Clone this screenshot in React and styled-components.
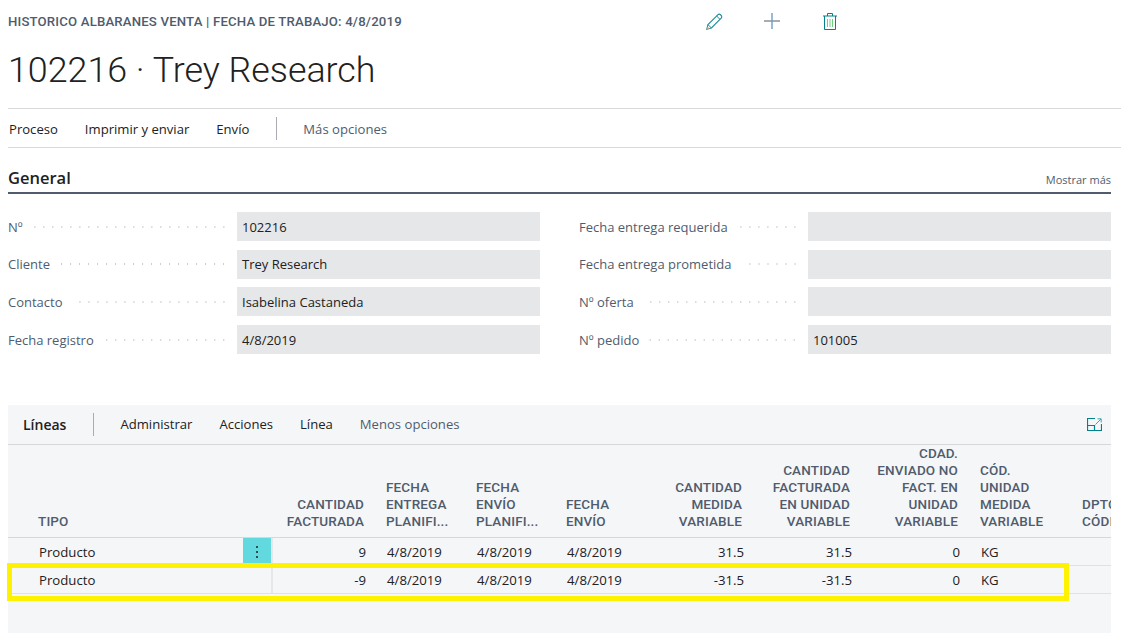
import React from 'react'
import styled, { createGlobalStyle } from 'styled-components'

const GlobalStyle = createGlobalStyle`
  html, body {
    margin: 0;
    padding: 0;
    background: #fff;
    font-family: "Open Sans", "Noto Sans", sans-serif;
    color: #212121;
  }
`

const Page = styled.div`
  width: 1121px;
  height: 633px;
  overflow: hidden;
  padding-left: 8px;
  box-sizing: border-box;
`

const Top = styled.div`
  display: flex;
  height: 42px;
  align-items: center;
`

const Caption = styled.div`
  font-family: Roboto, sans-serif;
  font-weight: 500;
  font-size: 13.2px;
  letter-spacing: 0.17px;
  color: #505c6d;
  width: 698px;
  flex: none;
  white-space: nowrap;
`

const TopIcons = styled.div`
  display: grid;
  grid-template-columns: 58px 59px auto;
  align-items: center;
`

const Title = styled.h1`
  margin: 0;
  height: 66px;
  font-family: Roboto, sans-serif;
  font-weight: 300;
  font-size: 35.8px;
  line-height: 56px;
  color: #212121;
  white-space: nowrap;
`

const ActionBar = styled.div`
  display: flex;
  align-items: center;
  height: 37px;
  padding-top: 1px;
  border-top: 1px solid #d8d8da;
  border-bottom: 1px solid #d8d8da;
  font-size: 13.1px;
`

const Action = styled.span`
  margin-left: ${(p) => p.$left || 0}px;
  color: ${(p) => (p.$muted ? '#505c6d' : '#212121')};
  white-space: nowrap;
`

const Divider = styled.span`
  width: 1px;
  height: 23px;
  background: #a9adb3;
  margin-left: ${(p) => p.$left}px;
`

const SectionHead = styled.div`
  display: flex;
  justify-content: space-between;
  align-items: flex-end;
  width: 1103px;
  height: 46px;
  box-sizing: border-box;
  border-bottom: 2px solid #505c6d;
  padding-bottom: 3px;
`

const SectionTitle = styled.h2`
  margin: 0;
  font-size: 16.5px;
  line-height: 22px;
  font-weight: 600;
  color: #212121;
`

const ShowMore = styled.span`
  font-size: 11px;
  line-height: 18px;
  color: #505c6d;
`

const Fields = styled.div`
  display: grid;
  grid-template-columns: 532px 532px;
  column-gap: 39px;
  padding-top: 18px;
`

const Field = styled.div`
  display: flex;
  height: 29px;
  margin-bottom: 8.7px;
  font-size: 13px;
`

const Label = styled.div`
  width: 229px;
  flex: none;
  display: flex;
  align-items: center;
  color: #505c6d;
  white-space: nowrap;
  padding-right: 9px;
  box-sizing: border-box;
`

const Dots = styled.span`
  flex: 1;
  height: 2px;
  margin-left: 10px;
  background-image: radial-gradient(circle, #c9ccd1 0.8px, transparent 0.9px);
  background-size: 9px 2px;
  background-repeat: repeat-x;
  background-position: right;
`

const Value = styled.div`
  flex: 1;
  display: flex;
  align-items: center;
  padding-left: 5px;
  background: #e6e7e9;
  color: #212121;
`

const Panel = styled.div`
  width: 1103px;
  height: 228px;
  margin-top: 42.2px;
  background: #f5f6f8;
  clip-path: inset(0 0 0 -2px);
`

const PanelBar = styled.div`
  display: flex;
  align-items: center;
  height: 40px;
  box-sizing: border-box;
  border-bottom: 1px solid #d5d7da;
  padding-right: 9px;
  font-size: 13.1px;
`

const PanelName = styled.span`
  margin-left: 15px;
  font-size: 14px;
  font-weight: 600;
  color: #212121;
`

const ExpandWrap = styled.span`
  margin-left: auto;
  display: flex;
`

const Row = styled.div`
  position: relative;
  display: grid;
  grid-template-columns: 235px 29px 104px 90px 90px 90px 108px 108px 108px 102px 80px;
  width: 1144px;
`

const HeadRow = styled(Row)`
  height: 92px;
  align-items: end;
  width: 1103px;
  border-bottom: 1px solid #d5d7da;
`

const Head = styled.div`
  font-family: Roboto, sans-serif;
  font-weight: 500;
  font-size: 13.5px;
  letter-spacing: 0.15px;
  line-height: 17px;
  color: #505c6d;
  padding-bottom: 7px;
  white-space: pre-line;
  text-align: ${(p) => (p.$right ? 'right' : 'left')};
  padding-left: ${(p) => p.$left || 0}px;
  padding-right: ${(p) => p.$right || 0}px;
`

const BodyRow = styled(Row)`
  height: 27px;
  width: 1103px;
  border-bottom: 1px solid #dfe1e4;
  font-size: 13.2px;
`

const Cell = styled.div`
  display: flex;
  align-items: center;
  justify-content: ${(p) => (p.$right ? 'flex-end' : 'flex-start')};
  padding-left: ${(p) => p.$left || 0}px;
  padding-right: ${(p) => p.$right || 0}px;
  padding-top: 1px;
  color: #212121;
`

const MenuCell = styled.div`
  display: flex;
  align-items: center;
  justify-content: center;
  background: ${(p) => (p.$active ? '#62d8df' : 'transparent')};
  box-shadow: 2px 0 0 #e6e7e9;
  width: 28px;
  margin-bottom: ${(p) => (p.$active ? '-1px' : '0')};
`

const Highlight = styled.div`
  position: absolute;
  left: -1px;
  top: -3px;
  width: 1062px;
  height: 38px;
  box-sizing: border-box;
  border: 5px solid #fff200;
  pointer-events: none;
`

const PencilIcon = () => (
  <svg width="17" height="17" viewBox="0 0 17 17" fill="none">
    <path d="M0.8 16.2 L2 11.6 L11.8 1.8 C12.6 1 13.7 1 14.8 2 C15.9 3.1 16 4.3 15.2 5.1 L5.4 15 Z" stroke="#1f8b9c" strokeWidth="1.1" />
    <path d="M10.6 3 L14 6.4 M2 11.6 L5.4 15" stroke="#1f8b9c" strokeWidth="1" />
    <path d="M0.8 16.2 L1.5 13.4 L3.6 15.5 Z" fill="#d9a464" />
  </svg>
)

const PlusIcon = () => (
  <svg width="16" height="16" viewBox="0 0 16 16" fill="none">
    <path d="M0 8 H16" stroke="#808a96" strokeWidth="1.4" />
    <path d="M8 0 V16" stroke="#6f9cc4" strokeWidth="1.4" />
  </svg>
)

const TrashIcon = () => (
  <svg width="14" height="17" viewBox="0 0 14 17" fill="none">
    <path d="M0 3 H14 M4.5 3 V0.5 H9.5 V3 M1.5 3 V16.5 H12.5 V3" stroke="#00828c" strokeWidth="1" />
    <path d="M4.5 6 V14 M7 6 V14 M9.5 6 V14" stroke="#6fcf83" strokeWidth="1" />
  </svg>
)

const ExpandIcon = () => (
  <svg width="15" height="13" viewBox="0 0 15 13" fill="none">
    <path d="M8 0.5 H0.5 V12.5 H14.5 V6" stroke="#00828c" strokeWidth="1.2" />
    <path d="M0.5 7.5 H7.5 V12.5" stroke="#00828c" strokeWidth="1.2" />
    <path d="M8.5 6.5 L14 1 M10.5 0.8 H14.2 V4.5" stroke="#3aa7ad" strokeWidth="1" />
  </svg>
)

const KebabIcon = () => (
  <svg width="4" height="14" viewBox="0 0 4 14">
    <circle cx="2" cy="2" r="1" fill="#212121" />
    <circle cx="2" cy="7" r="1" fill="#212121" />
    <circle cx="2" cy="12" r="1" fill="#212121" />
  </svg>
)

const leftFields = [
  ['Nº', '102216'],
  ['Cliente', 'Trey Research'],
  ['Contacto', 'Isabelina Castaneda'],
  ['Fecha registro', '4/8/2019'],
  ['Fecha entrega requerida', ''],
  ['Fecha entrega prometida', ''],
  ['Nº oferta', ''],
  ['Nº pedido', '101005'],
]

const rows = [
  { qty: '9', m: '31.5', f: '31.5' },
  { qty: '-9', m: '-31.5', f: '-31.5' },
]

export default function App() {
  return (
    <Page>
      <GlobalStyle />
      <Top>
        <Caption>HISTORICO ALBARANES VENTA | FECHA DE TRABAJO: 4/8/2019</Caption>
        <TopIcons>
          <PencilIcon />
          <PlusIcon />
          <TrashIcon />
        </TopIcons>
      </Top>
      <Title>102216 · Trey Research</Title>
      <ActionBar>
        <Action $left={1}>Proceso</Action>
        <Action $left={27}>Imprimir y enviar</Action>
        <Action $left={27}>Envío</Action>
        <Divider $left={27} />
        <Action $left={26} $muted>Más opciones</Action>
      </ActionBar>
      <SectionHead>
        <SectionTitle>General</SectionTitle>
        <ShowMore>Mostrar más</ShowMore>
      </SectionHead>
      <Fields>
        {[0, 1, 2, 3].map((i) => (
          <React.Fragment key={i}>
            <Field>
              <Label>{leftFields[i][0]}<Dots /></Label>
              <Value>{leftFields[i][1]}</Value>
            </Field>
            <Field>
              <Label>{leftFields[i + 4][0]}<Dots /></Label>
              <Value>{leftFields[i + 4][1]}</Value>
            </Field>
          </React.Fragment>
        ))}
      </Fields>
      <Panel>
        <PanelBar>
          <PanelName>Líneas</PanelName>
          <Divider $left={27} />
          <Action $left={26}>Administrar</Action>
          <Action $left={27}>Acciones</Action>
          <Action $left={27}>Línea</Action>
          <Action $left={27} $muted>Menos opciones</Action>
          <ExpandWrap><ExpandIcon /></ExpandWrap>
        </PanelBar>
        <HeadRow>
          <Head $left={30}>TIPO</Head>
          <Head />
          <Head $right={12}>{'CANTIDAD\nFACTURADA'}</Head>
          <Head $left={10}>{'FECHA\nENTREGA\nPLANIFI...'}</Head>
          <Head $left={10}>{'FECHA\nENVÍO\nPLANIFI...'}</Head>
          <Head $left={10}>{'FECHA\nENVÍO'}</Head>
          <Head $right={12}>{'CANTIDAD\nMEDIDA\nVARIABLE'}</Head>
          <Head $right={12}>{'CANTIDAD\nFACTURADA\nEN UNIDAD\nVARIABLE'}</Head>
          <Head $right={12}>{'CDAD.\nENVIADO NO\nFACT. EN\nUNIDAD\nVARIABLE'}</Head>
          <Head $left={10}>{'CÓD.\nUNIDAD\nMEDIDA\nVARIABLE'}</Head>
          <Head $left={10}>{'DPTO.\nCÓDIGO'}</Head>
        </HeadRow>
        {rows.map((r, i) => (
          <BodyRow key={i}>
            <Cell $left={31}>Producto</Cell>
            <MenuCell $active={i === 0}>{i === 0 && <KebabIcon />}</MenuCell>
            <Cell $right={10}>{r.qty}</Cell>
            <Cell $left={11}>4/8/2019</Cell>
            <Cell $left={11}>4/8/2019</Cell>
            <Cell $left={11}>4/8/2019</Cell>
            <Cell $right={10}>{r.m}</Cell>
            <Cell $right={10}>{r.f}</Cell>
            <Cell $right={10}>0</Cell>
            <Cell $left={11}>KG</Cell>
            <Cell />
            {i === 1 && <Highlight />}
          </BodyRow>
        ))}
      </Panel>
    </Page>
  )
}
